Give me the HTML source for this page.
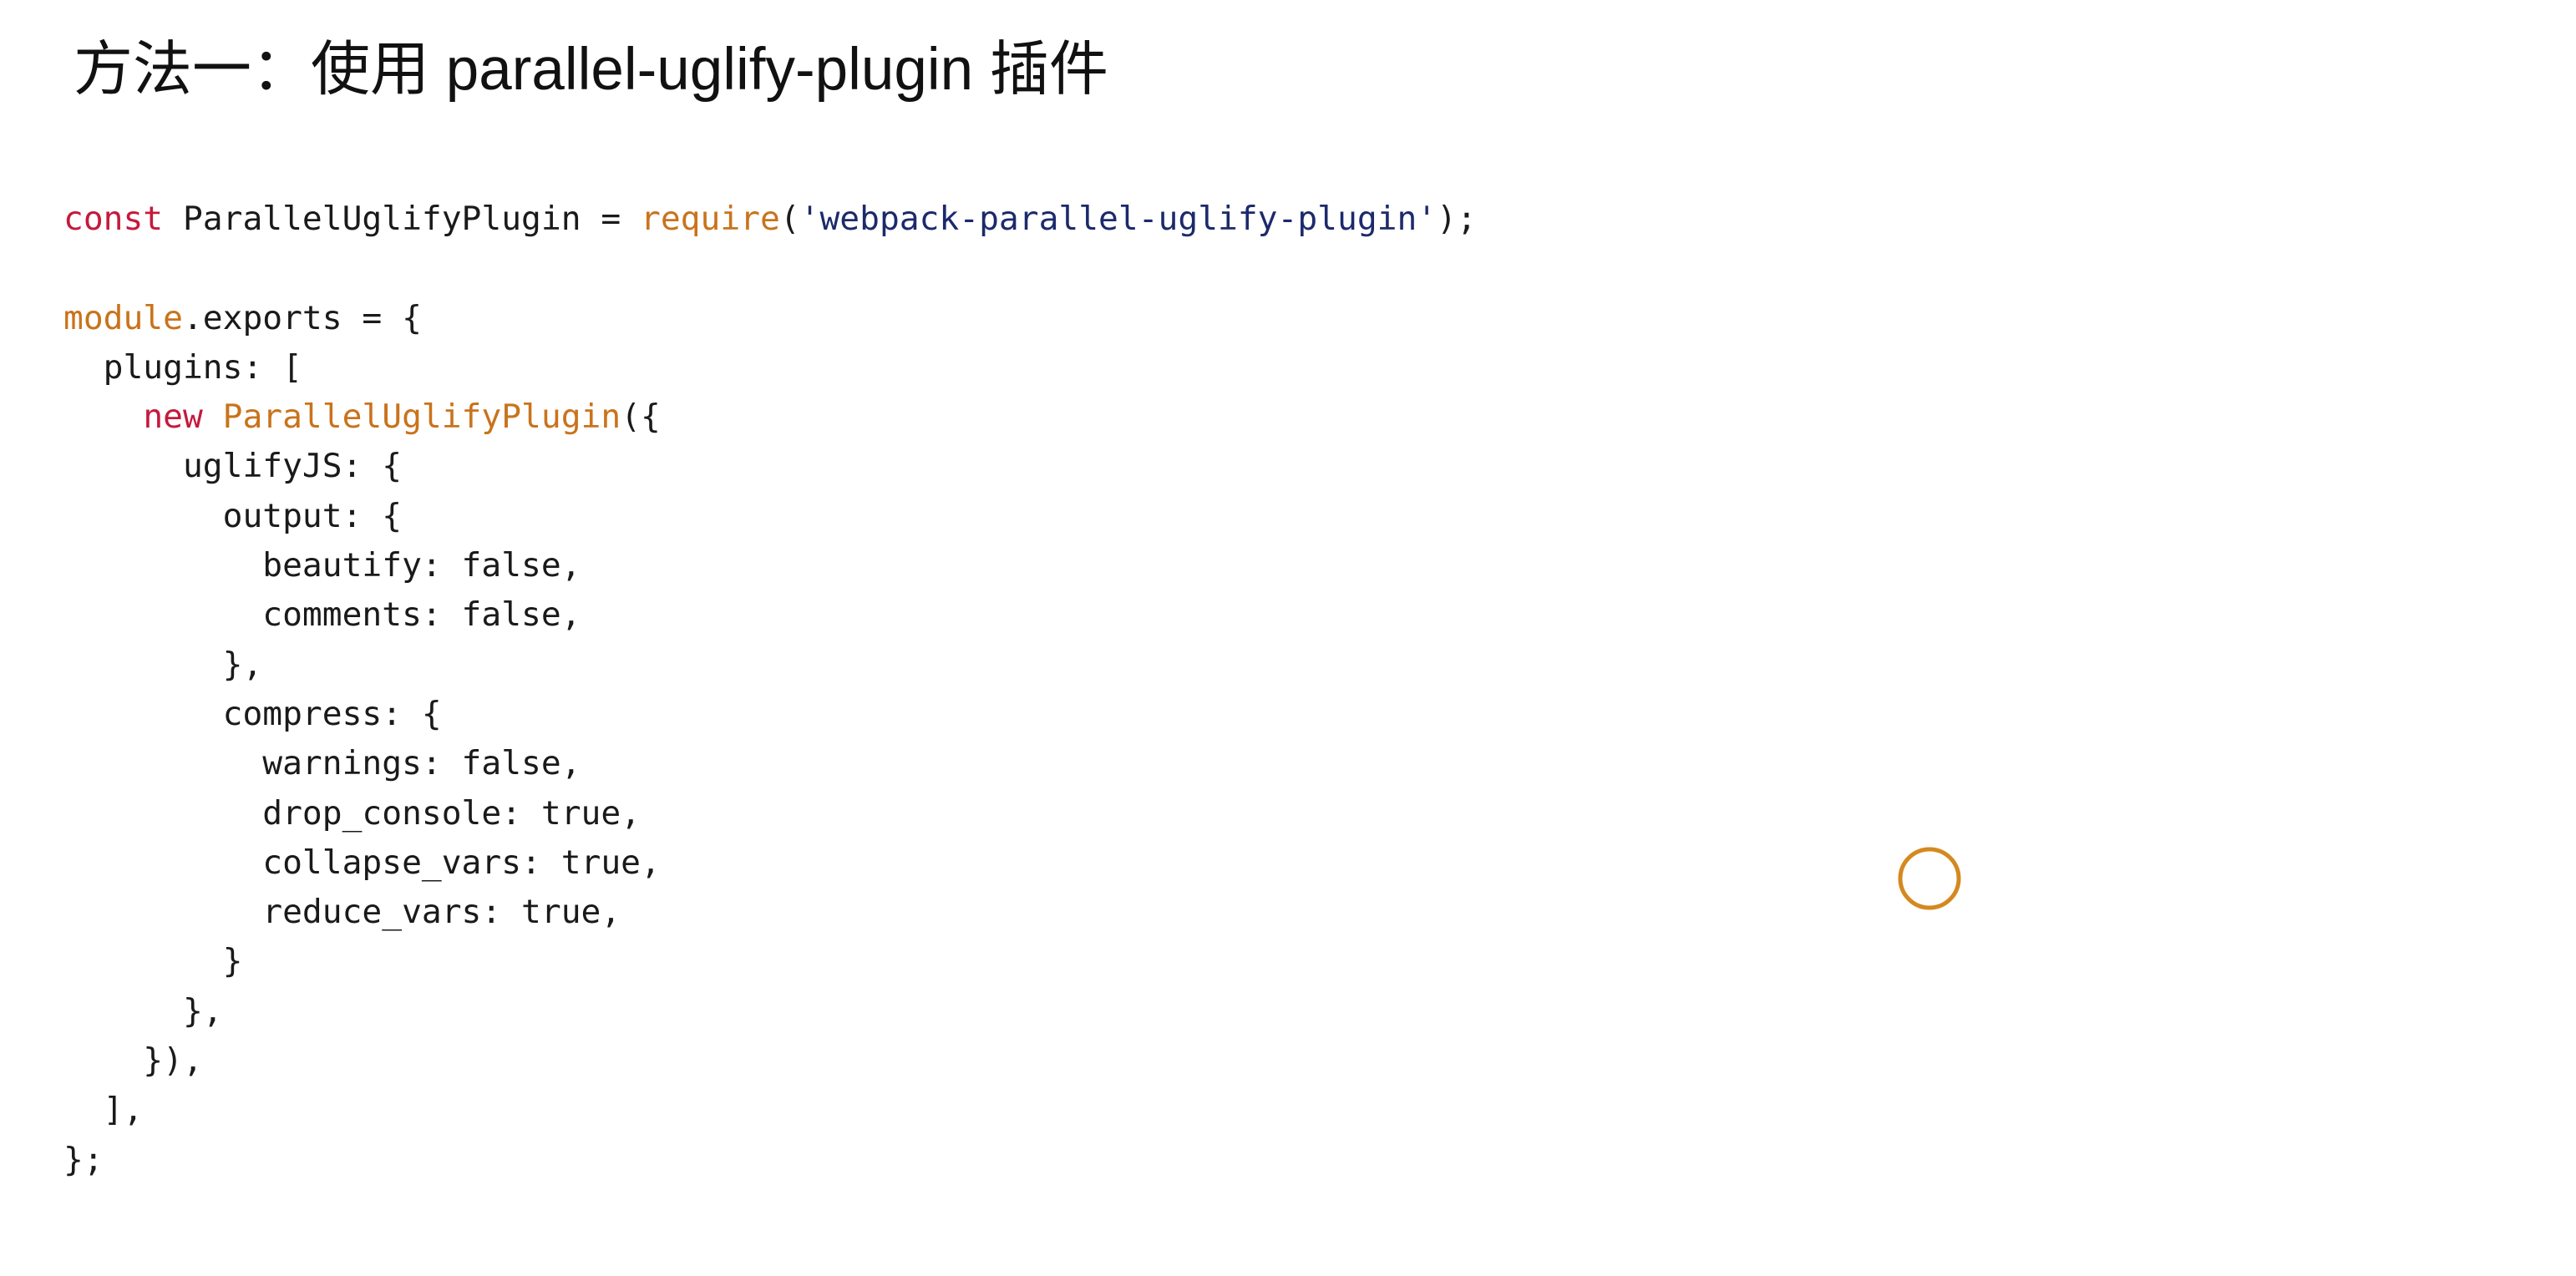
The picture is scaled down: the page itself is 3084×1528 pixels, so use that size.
<!DOCTYPE html>
<html><head><meta charset="utf-8"><style>
html,body{margin:0;padding:0;background:#fff;width:3084px;height:1528px;overflow:hidden;position:relative}
.title{position:absolute;left:88px;top:42px;font-family:"Liberation Sans","Noto Sans CJK SC",sans-serif;font-size:71px;line-height:84px;color:#111;white-space:pre}
pre{position:absolute;left:76px;top:233px;margin:0;font-family:"DejaVu Sans Mono","Liberation Mono",monospace;font-size:39.6px;line-height:59.3px;color:#1a1a1a}
.k{color:#c41a3c}.o{color:#c9731c}.s{color:#1c2a6b}
</style></head><body>
<div class="title">方法一：使用 parallel-uglify-plugin 插件</div>
<pre><span class="k">const</span> ParallelUglifyPlugin = <span class="o">require</span>(<span class="s">'webpack-parallel-uglify-plugin'</span>);

<span class="o">module</span>.exports = {
  plugins: [
    <span class="k">new</span> <span class="o">ParallelUglifyPlugin</span>({
      uglifyJS: {
        output: {
          beautify: false,
          comments: false,
        },
        compress: {
          warnings: false,
          drop_console: true,
          collapse_vars: true,
          reduce_vars: true,
        }
      },
    }),
  ],
};</pre>
<svg style="position:absolute;left:2270px;top:1012px" width="80" height="80"><circle cx="40" cy="40" r="35" fill="none" stroke="#d4891f" stroke-width="5"/></svg>
</body></html>
